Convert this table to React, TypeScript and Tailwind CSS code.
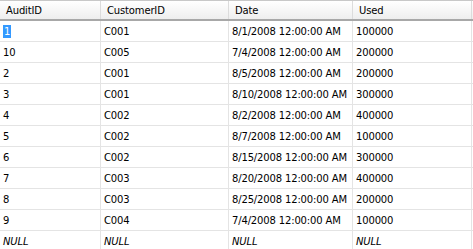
import React from 'react';

const COLUMNS = ["AuditID", "CustomerID", "Date", "Used"];

const ROWS: (string | null)[][] = [
  ["1", "C001", "8/1/2008 12:00:00 AM", "100000"],
  ["10", "C005", "7/4/2008 12:00:00 AM", "200000"],
  ["2", "C001", "8/5/2008 12:00:00 AM", "200000"],
  ["3", "C001", "8/10/2008 12:00:00 AM", "300000"],
  ["4", "C002", "8/2/2008 12:00:00 AM", "400000"],
  ["5", "C002", "8/7/2008 12:00:00 AM", "100000"],
  ["6", "C002", "8/15/2008 12:00:00 AM", "300000"],
  ["7", "C003", "8/20/2008 12:00:00 AM", "400000"],
  ["8", "C003", "8/25/2008 12:00:00 AM", "200000"],
  ["9", "C004", "7/4/2008 12:00:00 AM", "100000"],
  [null, null, null, null],
];

const GRID = "grid grid-cols-[101px_128px_124px_119px]";

export default function App() {
  return (
    <div className="w-[473px] h-[249px] overflow-hidden bg-white text-[10px] tracking-[-0.15px] text-black font-['DejaVu_Sans',sans-serif]">
      {/* header */}
      <div className={`${GRID} h-[21px] border-t border-[#c8c8c8] border-b-2 border-b-[#a8a8a8] bg-gradient-to-b from-white to-[#eeeeee]`}>
        {COLUMNS.map(col => (
          <div key={col} className="flex items-center pl-[6px] border-r border-[#dcdcdc]">
            {col}
          </div>
        ))}
      </div>

      {/* rows */}
      {ROWS.map((row, i) => (
        <div key={i} className={`${GRID} h-[21px] border-b border-[#e4e4e4]`}>
          {row.map((cell, j) => (
            <div key={j} className="flex items-center pl-[3px] border-r border-[#e4e4e4]">
              {cell === null ? (
                <span className="italic">NULL</span>
              ) : i === 0 && j === 0 ? (
                <span className="px-[1px] leading-[13px] bg-[#3399ff] text-white">{cell}</span>
              ) : (
                cell
              )}
            </div>
          ))}
        </div>
      ))}
    </div>
  );
}
